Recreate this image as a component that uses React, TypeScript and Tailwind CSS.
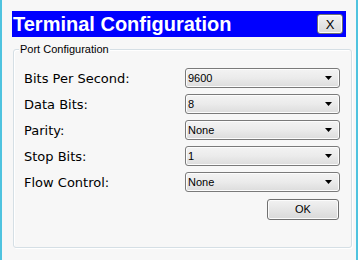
import React from "react";

const rows: { label: string; value: string }[] = [
  { label: "Bits Per Second:", value: "9600" },
  { label: "Data Bits:", value: "8" },
  { label: "Parity:", value: "None" },
  { label: "Stop Bits:", value: "1" },
  { label: "Flow Control:", value: "None" },
];

function Select({ value }: { value: string }) {
  return (
    <div className="w-[155px] h-[20px] rounded-[3px] border border-[#7a7a7a] bg-gradient-to-b from-[#f3f3f3] via-[#ebebeb] to-[#dcdcdc] flex items-center justify-between pl-[2px] pr-[7px] shadow-[inset_0_0_0_1px_#fcfcfc]">
      <span className="text-[11px] leading-none text-black" style={{ fontFamily: '"Liberation Sans", Arial, sans-serif' }}>
        {value}
      </span>
      <svg width="7" height="4" viewBox="0 0 7 4">
        <path d="M0 0 H7 L3.5 4 Z" fill="#000" />
      </svg>
    </div>
  );
}

export default function App() {
  return (
    <div className="w-[358px] h-[260px] bg-[#f7f7f7] border-x-2 border-[#4fc3df] overflow-hidden">
      <div className="ml-[10px] mt-[11px] w-[334px] h-[26px] bg-[#0000ff] flex items-center justify-between pl-[1px] pr-[3px]">
        <span
          className="text-white font-bold text-[20px] leading-none"
          style={{ fontFamily: '"Liberation Sans", Arial, sans-serif' }}
        >
          Terminal Configuration
        </span>
        <div
          className="w-[26px] h-[20px] rounded-[3px] border border-[#707070] bg-gradient-to-b from-[#f2f2f2] to-[#d9d9d9] flex items-center justify-center text-[13px] leading-none text-black shadow-[inset_0_0_0_1px_#fbfbfb]"
          style={{ fontFamily: '"Liberation Sans", Arial, sans-serif' }}
        >
          X
        </div>
      </div>
      <div className="relative ml-[11px] mt-[12px] w-[339px] h-[199px] rounded-[3px] border border-[#d5dfe5] shadow-[1px_1px_0_#ffffff,inset_1px_1px_0_#ffffff] pt-[18px] pl-[10px]">
        <span
          className="absolute left-[5px] top-[-7px] bg-[#f7f7f7] px-[1px] text-[11px] leading-[13px] text-black"
          style={{ fontFamily: '"Liberation Sans", Arial, sans-serif' }}
        >
          Port Configuration
        </span>
        <div className="flex flex-col gap-[6px]">
          {rows.map((r) => (
            <div key={r.label} className="flex items-center h-[20px]">
              <span
                className="w-[161px] text-[13px] leading-none text-black"
                style={{ fontFamily: '"DejaVu Sans", Verdana, sans-serif' }}
              >
                {r.label}
              </span>
              <Select value={r.value} />
            </div>
          ))}
        </div>
        <div className="flex justify-end mt-[7px] pr-[12px]">
          <div
            className="w-[72px] h-[21px] rounded-[3px] border border-[#707070] bg-gradient-to-b from-[#f2f2f2] to-[#d9d9d9] flex items-center justify-center text-[11px] leading-none text-black shadow-[inset_0_0_0_1px_#fbfbfb]"
            style={{ fontFamily: '"Liberation Sans", Arial, sans-serif' }}
          >
            OK
          </div>
        </div>
      </div>
    </div>
  );
}
